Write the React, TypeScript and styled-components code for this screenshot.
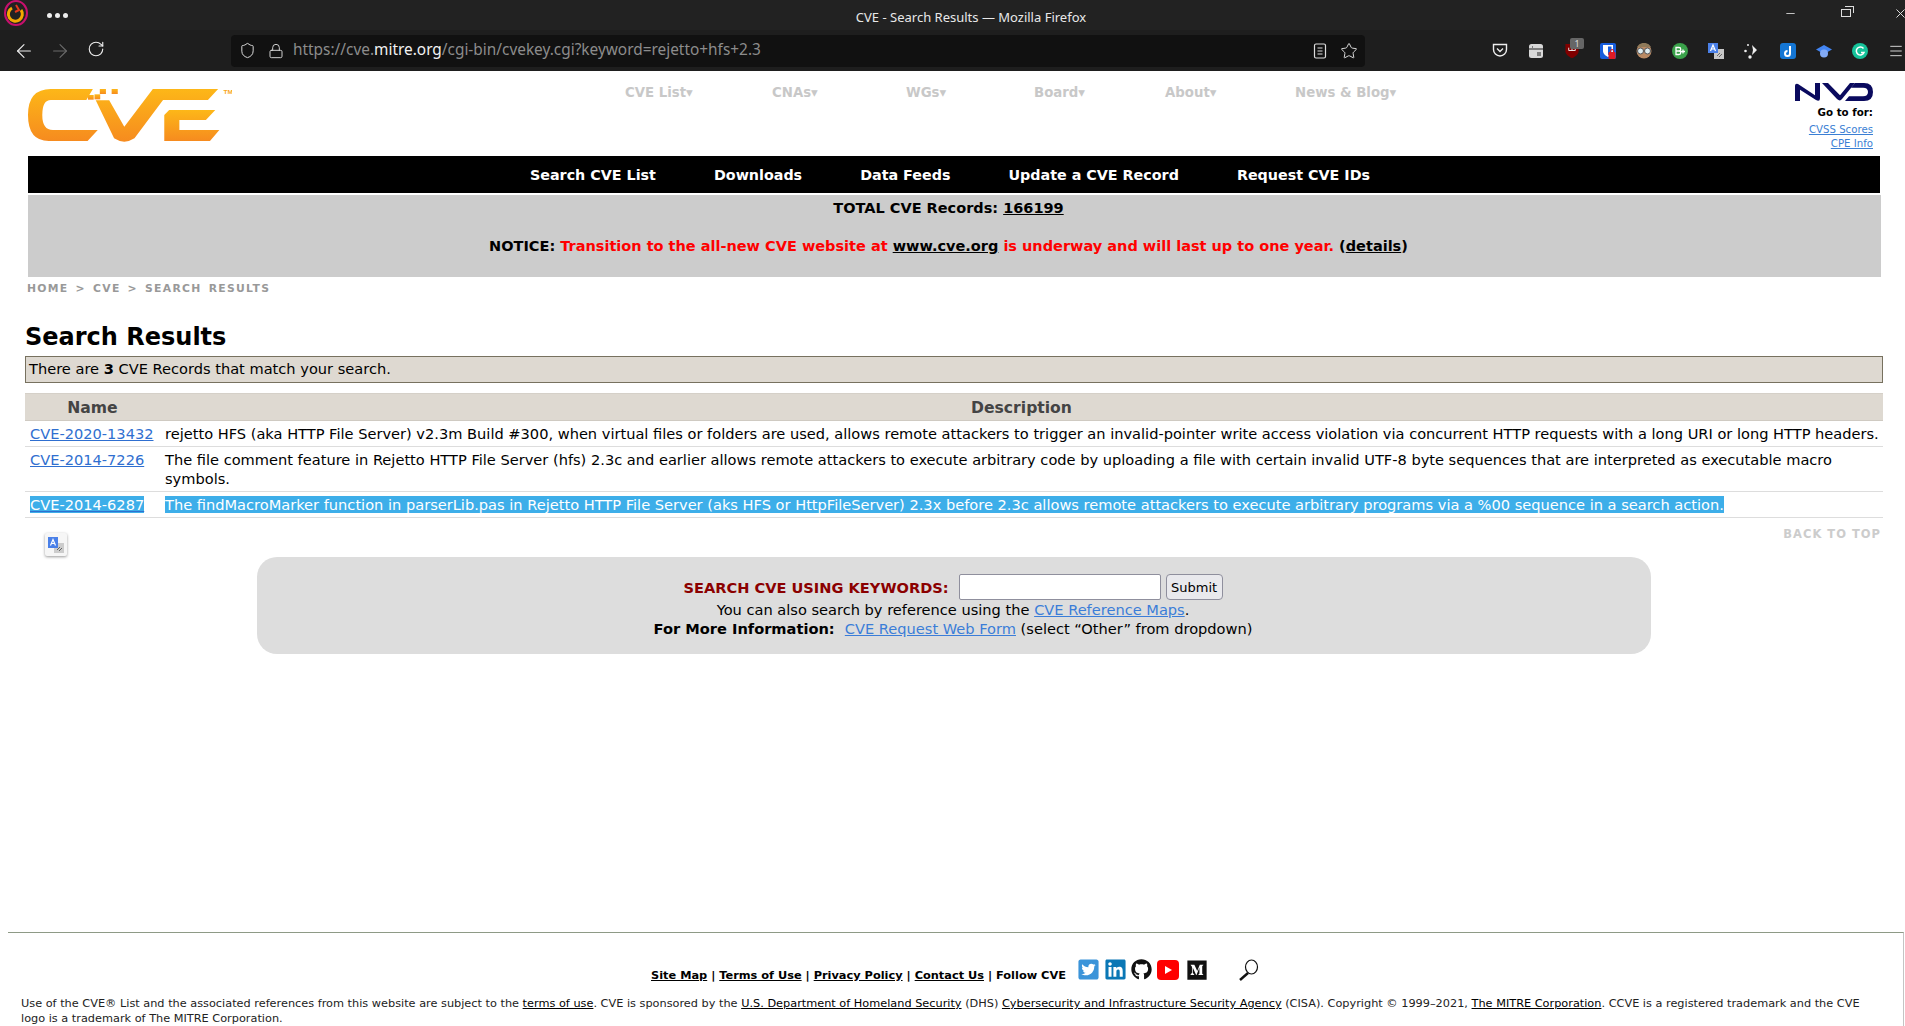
import React from 'react'
import styled, { createGlobalStyle } from 'styled-components'
import { ArrowLeft, ArrowRight, RotateCw, Shield, Lock, Star, Menu, Minus, X } from 'lucide-react'
import { FaTwitterSquare, FaLinkedin, FaGithub, FaMedium } from 'react-icons/fa'

const GlobalStyle = createGlobalStyle`
  html, body {
    margin: 0;
    padding: 0;
    background: #fff;
    overflow: hidden;
  }
  body {
    font-family: "DejaVu Sans", Verdana, sans-serif;
    font-size: 14.6px;
    color: #000;
  }
  p, h1 {
    margin: 0;
  }
`

const Window = styled.div`
  width: 1905px;
  height: 1026px;
  display: flex;
  flex-direction: column;
  overflow: hidden;
`

const TitleBar = styled.div`
  height: 30px;
  background: #222222;
  display: flex;
  align-items: center;
  color: #e8e8e8;
  flex-shrink: 0;
  overflow: hidden;
`

const AppLogo = styled.svg`
  width: 26px;
  height: 26px;
  margin: -4px 0 0 3px;
`

const Dots = styled.div`
  display: flex;
  gap: 3px;
  margin-left: 18px;

  span {
    width: 5px;
    height: 5px;
    border-radius: 50%;
    background: #eee;
  }
`

const WindowTitle = styled.div`
  flex: 1;
  text-align: center;
  font-family: "Noto Sans", sans-serif;
  font-size: 13px;
  padding: 3px 0 0 90px;
`

const WindowControls = styled.div`
  display: flex;
  align-items: center;
  margin: -4px -3px 0 0;
`

const MinimizeSlot = styled.div`
  display: flex;
  margin-right: 44px;
`

const Restore = styled.div`
  width: 8px;
  height: 6px;
  border: 1px solid #ddd;
  position: relative;
  margin-right: 42px;

  &::after {
    content: '';
    position: absolute;
    top: -4px;
    right: -4px;
    width: 8px;
    height: 6px;
    border-top: 1px solid #ddd;
    border-right: 1px solid #ddd;
  }
`

const Toolbar = styled.div`
  height: 41px;
  background: #1e1e1e;
  display: flex;
  align-items: center;
  flex-shrink: 0;
  color: #eee;
`

const NavButtons = styled.div`
  display: flex;
  width: 231px;
  padding-left: 6px;
  box-sizing: border-box;
`

const NavButton = styled.div<{ off?: boolean }>`
  width: 36px;
  display: flex;
  justify-content: center;
  color: ${props => (props.off ? '#6b6b6b' : '#eee')};
`

const UrlBar = styled.div`
  width: 1134px;
  height: 32px;
  background: #111111;
  border-radius: 4px;
  display: flex;
  align-items: center;
  color: #ddd;
  box-sizing: border-box;
  padding: 0 7px 0 8px;
  font-family: "Noto Sans", sans-serif;
  font-size: 15.4px;
`

const UrlText = styled.div`
  flex: 1;
  color: #8c8c8c;
  margin-left: 9px;
  padding-bottom: 2px;

  b {
    color: #f2f2f2;
    font-weight: 400;
  }
`

const UrlLock = styled.div`
  display: flex;
  margin-left: 12px;
`

const ReaderIcon = styled.svg`
  width: 14px;
  height: 16px;
  margin-right: 13px;
`

const Extensions = styled.div`
  display: flex;
  margin-left: 117px;
`

const Ext = styled.div<{ narrow?: boolean }>`
  width: ${props => (props.narrow ? '18px' : '36px')};
  margin-left: ${props => (props.narrow ? '9px' : '0')};
  height: 30px;
  display: flex;
  align-items: center;
  justify-content: center;
  position: relative;
  flex-shrink: 0;
`

const ExtBadge = styled.span`
  position: absolute;
  top: 2px;
  left: 16px;
  width: 14px;
  height: 11px;
  background: #666;
  border-radius: 2px;
  color: #ddd;
  font-family: "Noto Sans", sans-serif;
  font-size: 9px;
  line-height: 11px;
  text-align: center;
`

const Page = styled.div`
  flex: 1;
  display: flex;
  flex-direction: column;
  min-height: 0;
`

const Header = styled.div`
  height: 85px;
  padding: 0 32px 0 28px;
  display: flex;
`

const Logo = styled.svg`
  width: 204px;
  height: 60px;
  margin-top: 14px;
`

const TopNav = styled.nav`
  display: grid;
  grid-template-columns: 147px 134px 128px 131px 130px auto;
  margin-left: 393px;
  padding-top: 14px;
  height: 16px;
`

const TopNavItem = styled.span`
  font-size: 13.3px;
  font-weight: 700;
  line-height: 16px;
  color: #c8c8c8;
  white-space: nowrap;
`

const NvdBox = styled.div`
  margin-left: auto;
  padding-top: 12px;
  text-align: right;
  display: flex;
  flex-direction: column;
  align-items: flex-end;
`

const NvdLogo = styled.svg`
  width: 78px;
  height: 18px;
`

const GoTo = styled.p`
  font-size: 10.3px;
  font-weight: 700;
  line-height: 14px;
  margin: 4px 0;
`

const SmallLink = styled.a`
  font-size: 10.2px;
  line-height: 14px;
  color: #3b7fd4;
  text-decoration: underline;
`

const BlackBar = styled.div`
  margin-left: 28px;
  width: 1852px;
  height: 37px;
  box-sizing: border-box;
  padding-right: 8px;
  background: #000;
  display: flex;
  justify-content: center;
  align-items: center;
  gap: 58px;
`

const BlackItem = styled.span`
  color: #fff;
  font-size: 14.3px;
  font-weight: 700;
`

const Notice = styled.div`
  margin: 2px 0 0 28px;
  width: 1853px;
  height: 82px;
  background: #cccccc;
  box-sizing: border-box;
  padding: 4px 12px 0 0;
  text-align: center;
  font-size: 14.5px;
  font-weight: 700;
  line-height: 18px;

  a {
    color: #000;
    text-decoration: underline;
  }
`

const NoticeLine = styled.p`
  margin-bottom: 20px;
`

const Red = styled.span`
  color: #f00;
`

const Crumbs = styled.div`
  margin: 5px 0 0 27px;
  font-size: 10.8px;
  font-weight: 700;
  letter-spacing: 1.3px;
  line-height: 14px;
  color: #999;
  word-spacing: 2px;
`

const Content = styled.div`
  margin: 0 22px 0 25px;
`

const Title = styled.h1`
  font-size: 24px;
  font-weight: 700;
  line-height: 32px;
  margin-top: 25px;
`

const MatchBox = styled.div`
  height: 27px;
  box-sizing: border-box;
  margin-top: 3px;
  border: 1px solid #77715f;
  background: #ded9d1;
  padding-left: 3px;
  line-height: 24px;
`

const Results = styled.table`
  width: 100%;
  margin-top: 10px;
  border-collapse: collapse;
  line-height: 19px;
`

const Th = styled.th`
  height: 27px;
  padding: 2px 0 0;
  box-sizing: border-box;
  background: #ded9d1;
  color: #444;
  font-size: 15.6px;
  font-weight: 700;
  border-top: 1px solid #d5d0c8;
  border-bottom: 1px solid #cfcac2;
`

const Td = styled.td`
  padding: 3px 2px 3px 5px;
  vertical-align: top;
  border-bottom: 1px solid #ddd;
  text-align: left;
`

const NameCell = styled(Td)`
  width: 128px;
  white-space: nowrap;
`

const CveLink = styled.a<{ selected?: boolean }>`
  color: ${props => (props.selected ? '#fff' : '#2f6fd0')};
  background: ${props => (props.selected ? '#3daee9' : 'transparent')};
  text-decoration: underline;
  text-decoration-color: #2f6fd0;
`

const Selected = styled.span`
  background: #3daee9;
  color: #fff;
`

const UnderTable = styled.div`
  display: flex;
  justify-content: space-between;
  height: 39px;
`

const TranslateTile = styled.div`
  margin: 15px 0 0 20px;
  width: 22px;
  height: 23px;
  background: #f6f6f6;
  border-radius: 2px;
  box-shadow: 0 1px 3px rgba(0, 0, 0, 0.4);
  display: flex;
  align-items: center;
  justify-content: center;
`

const BackToTop = styled.span`
  margin: 8px 2px 0 0;
  font-size: 11.5px;
  line-height: 16px;
  font-weight: 700;
  letter-spacing: 1px;
  color: #ccc;
`

const SearchPanel = styled.div`
  margin-left: 232px;
  width: 1394px;
  height: 97px;
  background: #dddddd;
  border-radius: 20px;
  box-sizing: border-box;
  padding: 17px 2px 0 0;
  text-align: center;
  line-height: 19px;

  a {
    color: #3b7dd8;
    text-decoration: underline;
  }
`

const SearchRow = styled.div`
  display: flex;
  justify-content: center;
  align-items: center;
  height: 26px;
`

const SearchLabel = styled.label`
  color: #8b0000;
  font-weight: 700;
  margin-right: 10px;
`

const SearchInput = styled.input`
  width: 202px;
  height: 26px;
  box-sizing: border-box;
  border: 1px solid #8f8f9d;
  border-radius: 2px;
  background: #fff;
  padding: 0;
`

const SubmitButton = styled.button`
  width: 57px;
  height: 26px;
  margin-left: 5px;
  border: 1px solid #8f8f9d;
  border-radius: 4px;
  background: #e9e9ed;
  color: #000;
  font-family: inherit;
  font-size: 13px;
  padding: 0;
`

const Spacer = styled.div`
  flex: 1;
`

const Footer = styled.footer`
  margin: 0 1px 0 8px;
  border-top: 1px solid #8e9a86;
  border-right: 1px solid #c4c4c4;
  height: 93px;
`

const FooterLinks = styled.div`
  display: flex;
  justify-content: center;
  align-items: flex-start;
  height: 21px;
  margin-top: 26px;
  padding-right: 1px;
  font-size: 11.35px;
  font-weight: 700;
  line-height: 16px;

  a {
    color: #000;
    text-decoration: underline;
  }
`

const FooterText = styled.span`
  margin-top: 8px;
  white-space: pre;
`

const Socials = styled.div`
  display: flex;
  gap: 4px;
  align-items: center;
  margin-left: 11px;
  height: 21px;
`

const YoutubeTile = styled.svg`
  width: 22px;
  height: 20px;
  margin: 0 3px 0 1px;
`

const Magnifier = styled.svg`
  width: 21px;
  height: 22px;
  margin-left: 30px;
`

const Legal = styled.p`
  margin: 16px 0 0 13px;
  font-size: 11.3px;
  line-height: 15px;
  color: #222;
  width: 1860px;

  a {
    color: #000;
    text-decoration: underline;
  }
`

const App = () => (
  <Window>
    <GlobalStyle />
    <TitleBar>
      <AppLogo viewBox="0 0 26 26">
        <ellipse cx="13" cy="13" rx="11" ry="12" fill="none" stroke="#c8106e" strokeWidth="2" />
        <path d="M9 8a7 7 0 1 0 9 2" fill="none" stroke="#f5a800" strokeWidth="3" />
        <path d="M13 5l3 5-4 2" fill="none" stroke="#e5381b" strokeWidth="2" />
      </AppLogo>
      <Dots>
        <span />
        <span />
        <span />
      </Dots>
      <WindowTitle>CVE - Search Results — Mozilla Firefox</WindowTitle>
      <WindowControls>
        <MinimizeSlot>
          <Minus size={13} strokeWidth={1.5} />
        </MinimizeSlot>
        <Restore />
        <X size={15} strokeWidth={1.5} />
      </WindowControls>
    </TitleBar>
    <Toolbar>
      <NavButtons>
        <NavButton>
          <ArrowLeft size={22} strokeWidth={1.2} />
        </NavButton>
        <NavButton off>
          <ArrowRight size={22} strokeWidth={1.2} />
        </NavButton>
        <NavButton>
          <RotateCw size={18} strokeWidth={1.5} />
        </NavButton>
      </NavButtons>
      <UrlBar>
        <Shield size={17} strokeWidth={1.4} />
        <UrlLock>
          <Lock size={16} strokeWidth={1.4} />
        </UrlLock>
        <UrlText>
          https://cve.<b>mitre.org</b>/cgi-bin/cvekey.cgi?keyword=rejetto+hfs+2.3
        </UrlText>
        <ReaderIcon viewBox="0 0 14 16" fill="none" stroke="#ddd" strokeWidth="1.2">
          <rect x="1.500" y="1" width="11" height="14" rx="1.500" />
          <path d="M4.500 5h5M4.500 8h5M4.500 11h5" />
        </ReaderIcon>
        <Star size={18} strokeWidth={1.3} />
      </UrlBar>
      <Extensions>
        <Ext>
          <svg width="16" height="15" viewBox="0 0 16 15" fill="none" stroke="#eee" strokeWidth="1.4">
            <path d="M1.500 1.500h13v5a6.500 6.500 0 0 1-13 0z" />
            <path d="M5 5.500l3 3 3-3" />
          </svg>
        </Ext>
        <Ext>
          <svg width="14" height="14" viewBox="0 0 14 14">
            <rect width="14" height="14" rx="2.500" fill="#d8d8d8" />
            <path d="M0 5h14" stroke="#222" />
            <path d="M8 9h4M8 11h4M3 3h1" stroke="#222" />
          </svg>
        </Ext>
        <Ext>
          <svg width="14" height="15" viewBox="0 0 14 16">
            <path d="M0 1h14v8c0 3-4 6-7 7-3-1-7-4-7-7z" fill="#800000" />
            <path d="M3.500 5v3h7V5M7 5v3" stroke="#eee" fill="none" />
          </svg>
          <ExtBadge>1</ExtBadge>
        </Ext>
        <Ext>
          <svg width="16" height="16" viewBox="0 0 16 16">
            <rect width="16" height="16" rx="2" fill="#175ddc" />
            <path d="M3 2h10v6c0 3-3 5-5 6-2-1-5-3-5-6z" fill="#fff" />
            <path d="M8 3.500h3.500v4.500c0 2-2 3.500-3.500 4.200z" fill="#175ddc" />
            <rect x="8.500" y="9" width="7" height="7" rx="1" fill="#e01b24" />
            <path d="M10.500 9.500v-1.500a1.500 1.500 0 0 1 3 0v1.500" fill="none" stroke="#e01b24" />
          </svg>
        </Ext>
        <Ext>
          <svg width="16" height="16" viewBox="0 0 16 16">
            <circle cx="8" cy="8" r="7.500" fill="#b98a64" />
            <path d="M1 4a8 8 0 0 1 14 0z" fill="#8f7a5a" />
            <circle cx="4.500" cy="8" r="3" fill="#dfeef2" stroke="#555" />
            <circle cx="11.500" cy="8" r="3" fill="#dfeef2" stroke="#555" />
          </svg>
        </Ext>
        <Ext>
          <svg width="16" height="16" viewBox="0 0 16 16">
            <circle cx="8" cy="8" r="8" fill="#3aa14a" />
            <path d="M4 4.500h3a1.500 1.500 0 0 1 0 3.500 1.700 1.700 0 0 1 0 3.500H4zM4 8h3M11 6.500v4M9 8.500h4" fill="none" stroke="#fff" strokeWidth="1.300" />
          </svg>
        </Ext>
        <Ext>
          <svg width="16" height="16" viewBox="0 0 16 16">
            <rect x="6" y="6" width="10" height="10" fill="#c8c8c8" />
            <rect width="10" height="10" fill="#4a80e8" />
            <path d="M2.500 8l2.500-6 2.500 6M3.500 6h3" fill="none" stroke="#fff" strokeWidth="1.200" />
            <path d="M9 13l3-3M11 14l3-3" stroke="#666" />
          </svg>
        </Ext>
        <Ext>
          <svg width="16" height="16" viewBox="0 0 16 16" fill="#eee">
            <circle cx="4" cy="2" r="1" />
            <circle cx="1.500" cy="8" r="1.300" />
            <circle cx="6" cy="14" r="1.700" />
            <path d="M8 2l5 5-5 5 1-5z" />
          </svg>
        </Ext>
        <Ext>
          <svg width="16" height="16" viewBox="0 0 16 16">
            <rect width="16" height="16" rx="3" fill="#1476d4" />
            <path d="M10 3v7.500a2.500 2.500 0 1 1-2.500-2.500" fill="none" stroke="#fff" strokeWidth="2" />
          </svg>
        </Ext>
        <Ext>
          <svg width="16" height="16" viewBox="0 0 16 16">
            <path d="M0 6.500L8 2l8 4.500L8 11z" fill="#4285f4" />
            <circle cx="8" cy="10.500" r="4" fill="#82aaf5" />
          </svg>
        </Ext>
        <Ext>
          <svg width="16" height="16" viewBox="0 0 16 16">
            <circle cx="8" cy="8" r="8" fill="#15c39a" />
            <path d="M11.500 5.500a4 4 0 1 0 .5 4H9" fill="none" stroke="#fff" strokeWidth="1.500" />
          </svg>
        </Ext>
        <Ext narrow>
          <Menu size={16} strokeWidth={1.3} />
        </Ext>
      </Extensions>
    </Toolbar>
    <Page>
      <Header>
        <Logo viewBox="69 255 500 180" preserveAspectRatio="none">
          <defs>
            <linearGradient id="cveGrad" x1="0" y1="0" x2="0" y2="1">
              <stop offset="0" stopColor="#fdb718" />
              <stop offset="1" stopColor="#f68b1f" />
            </linearGradient>
          </defs>
          <g fill="url(#cveGrad)">
            <path d="M125 267H228L212 300H125Q104 300 104 345Q104 390 130 390H240L215 423H120Q69 423 69 345Q69 267 125 267Z" />
            <rect x="245" y="267" width="15" height="15" />
            <rect x="274" y="267" width="15" height="15" />
            <rect x="232" y="283" width="14" height="15" />
            <rect x="216" y="285" width="14" height="14" />
            <path d="M235 301H268L305 380L375 267H535L510 300H400L330 415Q305 435 280 415Z" />
            <path d="M415 330H528L505 360H440V390H538L515 423H403V345Z" />
          </g>
          <text x="548" y="281" fontSize="16" fontWeight="700" fill="#f9a61a" fontFamily="Liberation Sans, sans-serif">TM</text>
        </Logo>
        <TopNav>
          <TopNavItem>CVE List▾</TopNavItem>
          <TopNavItem>CNAs▾</TopNavItem>
          <TopNavItem>WGs▾</TopNavItem>
          <TopNavItem>Board▾</TopNavItem>
          <TopNavItem>About▾</TopNavItem>
          <TopNavItem>News &amp; Blog▾</TopNavItem>
        </TopNav>
        <NvdBox>
          <NvdLogo viewBox="0 0 78 19" preserveAspectRatio="none" fill="#0a0a5e">
            <path d="M0 19V3Q0 0 3 1L20 13V0h5v16Q25 20 21 18L5 7v12z" />
            <path d="M27 0h6l12 13L55 0h5L47 17Q45 20 42 17z" />
            <path d="M50 19l4-5h14q5 0 5-4.500T68 5H56l4-5h9q9 0 9 9.500T69 19z" />
          </NvdLogo>
          <GoTo>Go to for:</GoTo>
          <SmallLink>CVSS Scores</SmallLink>
          <SmallLink>CPE Info</SmallLink>
        </NvdBox>
      </Header>
      <BlackBar>
        <BlackItem>Search CVE List</BlackItem>
        <BlackItem>Downloads</BlackItem>
        <BlackItem>Data Feeds</BlackItem>
        <BlackItem>Update a CVE Record</BlackItem>
        <BlackItem>Request CVE IDs</BlackItem>
      </BlackBar>
      <Notice>
        <NoticeLine>
          TOTAL CVE Records: <a>166199</a>
        </NoticeLine>
        <p>
          NOTICE: <Red>Transition to the all-new CVE website at </Red>
          <a>www.cve.org</a>
          <Red> is underway and will last up to one year. </Red>(<a>details</a>)
        </p>
      </Notice>
      <Crumbs>HOME &gt; CVE &gt; SEARCH RESULTS</Crumbs>
      <Content>
        <Title>Search Results</Title>
        <MatchBox>
          There are <b>3</b> CVE Records that match your search.
        </MatchBox>
        <Results>
          <thead>
            <tr>
              <Th>Name</Th>
              <Th>Description</Th>
            </tr>
          </thead>
          <tbody>
            <tr>
              <NameCell>
                <CveLink>CVE-2020-13432</CveLink>
              </NameCell>
              <Td>
                rejetto HFS (aka HTTP File Server) v2.3m Build #300, when virtual files or folders are used, allows remote attackers to trigger an invalid-pointer write access violation via concurrent HTTP requests with a long URI or long HTTP headers.
              </Td>
            </tr>
            <tr>
              <NameCell>
                <CveLink>CVE-2014-7226</CveLink>
              </NameCell>
              <Td>
                The file comment feature in Rejetto HTTP File Server (hfs) 2.3c and earlier allows remote attackers to execute arbitrary code by uploading a file with certain invalid UTF-8 byte sequences that are interpreted as executable macro symbols.
              </Td>
            </tr>
            <tr>
              <NameCell>
                <CveLink selected>CVE-2014-6287</CveLink>
              </NameCell>
              <Td>
                <Selected>
                  The findMacroMarker function in parserLib.pas in Rejetto HTTP File Server (aks HFS or HttpFileServer) 2.3x before 2.3c allows remote attackers to execute arbitrary programs via a %00 sequence in a search action.
                </Selected>
              </Td>
            </tr>
          </tbody>
        </Results>
        <UnderTable>
          <TranslateTile>
            <svg width="16" height="16" viewBox="0 0 16 16">
              <rect x="6" y="6" width="10" height="10" fill="#ccc" />
              <rect width="10" height="11" fill="#4a80e8" />
              <path d="M2.500 8.500l2.500-6 2.500 6M3.500 6.500h3" fill="none" stroke="#fff" strokeWidth="1.200" />
              <path d="M9 13l3-3M11 14l3-3" stroke="#666" />
            </svg>
          </TranslateTile>
          <BackToTop>BACK TO TOP</BackToTop>
        </UnderTable>
        <SearchPanel>
          <SearchRow>
            <SearchLabel>SEARCH CVE USING KEYWORDS:</SearchLabel>
            <SearchInput />
            <SubmitButton>Submit</SubmitButton>
          </SearchRow>
          <p>
            You can also search by reference using the <a>CVE Reference Maps</a>.
          </p>
          <p>
            <b>For More Information:&nbsp; </b> <a>CVE Request Web Form</a> (select “Other” from dropdown)
          </p>
        </SearchPanel>
      </Content>
      <Spacer />
      <Footer>
        <FooterLinks>
          <FooterText>
            <a>Site Map</a> | <a>Terms of Use</a> | <a>Privacy Policy</a> | <a>Contact Us</a> | Follow CVE
          </FooterText>
          <Socials>
            <FaTwitterSquare size={23} color="#3b94d9" />
            <FaLinkedin size={23} color="#0a77b5" />
            <FaGithub size={21} color="#111" />
            <YoutubeTile viewBox="0 0 22 20">
              <rect width="22" height="20" rx="4" fill="#f00" />
              <path d="M8 6l7 4-7 4z" fill="#fff" />
            </YoutubeTile>
            <FaMedium size={22} color="#111" />
          </Socials>
          <Magnifier viewBox="0 0 21 22" fill="none" stroke="#111">
            <ellipse cx="13.500" cy="8" rx="6" ry="7" strokeWidth="1.200" />
            <path d="M10 14L2 21" strokeWidth="2.400" />
          </Magnifier>
        </FooterLinks>
        <Legal>
          Use of the CVE® List and the associated references from this website are subject to the <a>terms of use</a>. CVE is sponsored by the <a>U.S. Department of Homeland Security</a> (DHS) <a>Cybersecurity and Infrastructure Security Agency</a> (CISA). Copyright © 1999–2021, <a>The MITRE Corporation</a>. CCVE is a registered trademark and the CVE logo is a trademark of The MITRE Corporation.
        </Legal>
      </Footer>
    </Page>
  </Window>
)

export default App
